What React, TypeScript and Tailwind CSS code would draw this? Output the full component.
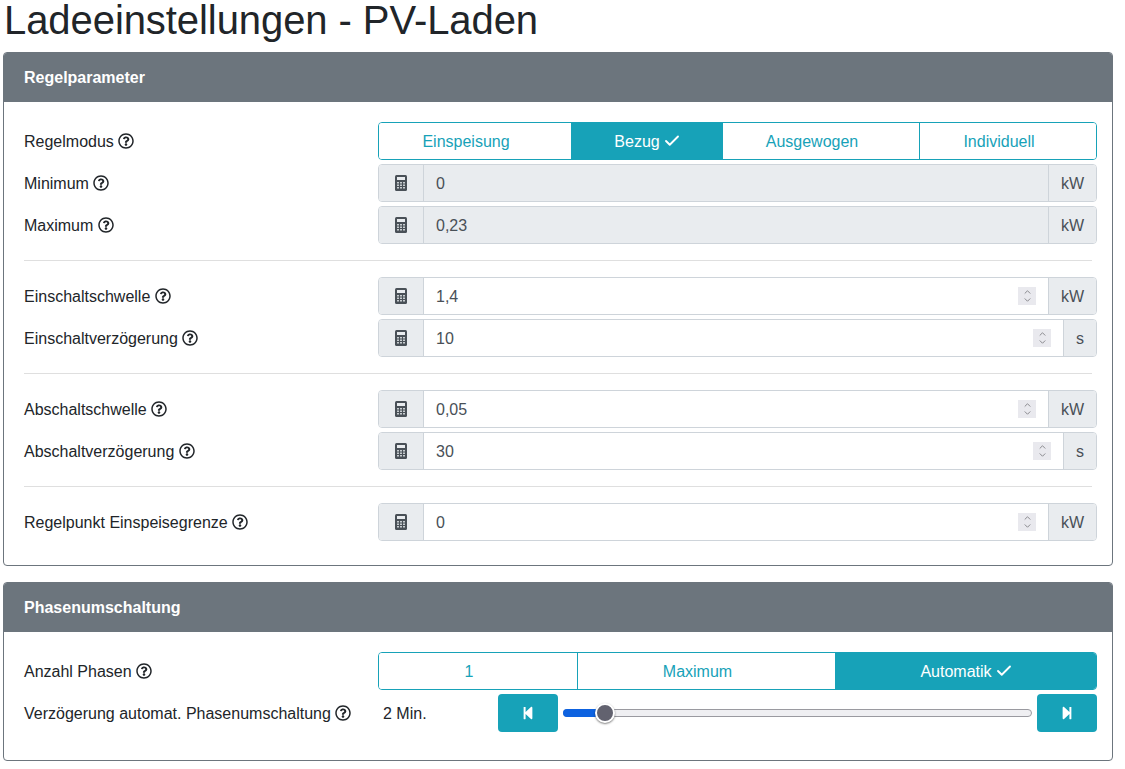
import { FaRegQuestionCircle, FaStepBackward, FaStepForward } from "react-icons/fa";
import { Check, ChevronUp, ChevronDown } from "lucide-react";

const Help = () => <FaRegQuestionCircle className="inline-block ml-[4.5px] text-[16px] text-[#212529] align-[-2px]" />;

const CalculatorIcon = () => (
  <svg width="12" height="16" viewBox="0 0 12 16" aria-hidden="true">
    <rect width="12" height="16" rx="1.5" fill="#495057" />
    <rect x="2" y="2" width="8" height="3" fill="#e9ecef" />
    <rect x="2" y="7" width="2" height="1.5" fill="#e9ecef" opacity="0.8" />
    <rect x="5" y="7" width="2" height="1.5" fill="#e9ecef" opacity="0.8" />
    <rect x="8" y="7" width="2" height="1.5" fill="#e9ecef" opacity="0.8" />
    <rect x="2" y="9.5" width="2" height="1.5" fill="#e9ecef" opacity="0.8" />
    <rect x="5" y="9.5" width="2" height="1.5" fill="#e9ecef" opacity="0.8" />
    <rect x="8" y="9.5" width="2" height="1.5" fill="#e9ecef" opacity="0.8" />
    <rect x="2" y="12" width="2" height="1.5" fill="#e9ecef" opacity="0.8" />
    <rect x="5" y="12" width="2" height="1.5" fill="#e9ecef" opacity="0.8" />
    <rect x="8" y="12" width="2" height="1.5" fill="#e9ecef" opacity="0.8" />
  </svg>
);

const Label = ({ text }: { text: string }) => (
  <div className="w-[354px] shrink-0 pt-[2px] text-[#212529]">
    {text}
    <Help />
  </div>
);

const Segmented = ({ items }: { items: { label: string; width: string; active?: boolean }[] }) => (
  <div className="flex flex-1 h-[38px] rounded border border-[#17a2b8] overflow-hidden">
    {items.map((item, i) => (
      <div
        key={item.label}
        className={`${item.width} flex items-center justify-center gap-[3px] pt-[2px] ${i > 0 ? "border-l border-[#17a2b8]" : ""} ${item.active ? "bg-[#17a2b8] text-white pl-[1px]" : "bg-white text-[#17a2b8]"}`}
      >
        {item.label}
        {/* inactive buttons keep the room of the hidden check mark */}
        {item.active ? <Check size={18} strokeWidth={2.5} className="-mt-[2px]" /> : <span className="w-[15px]" />}
      </div>
    ))}
  </div>
);

const NumberRow = ({ label, value, unit, disabled }: { label: string; value: string; unit: string; disabled?: boolean }) => (
  <div className="flex items-center h-[38px]">
    <Label text={label} />
    <div className="flex flex-1 h-[38px] rounded border border-[#ced4da] overflow-hidden text-[#495057]">
      <div className="w-[45px] shrink-0 flex items-center justify-center bg-[#e9ecef] border-r border-[#ced4da]">
        <CalculatorIcon />
      </div>
      <div className={`flex-1 flex items-center justify-between px-[12px] ${disabled ? "bg-[#e9ecef]" : "bg-white"}`}>
        <span className="pt-[2px]">{value}</span>
        {!disabled && (
          <span className="w-[18px] h-[18px] bg-[#e9e9ee] flex flex-col items-center justify-center text-[#77777c]">
            <ChevronUp size={11} strokeWidth={2} className="-mb-[1px]" />
            <ChevronDown size={11} strokeWidth={2} className="-mt-[1px]" />
          </span>
        )}
      </div>
      <div className={`${unit === "kW" ? "w-[48px]" : "w-[33px]"} shrink-0 flex items-center justify-center pt-[2px] bg-[#e9ecef] border-l border-[#ced4da]`}>
        {unit}
      </div>
    </div>
  </div>
);

const Card = ({ title, children }: { title: string; children: React.ReactNode }) => (
  <section className="rounded border border-[#6c757d] overflow-hidden ml-[3px] w-[1110px]">
    <div className="h-[49px] bg-[#6c757d] text-white font-bold flex items-center px-[20px]">{title}</div>
    <div className="pl-[20px] pr-[15px] pt-[20px]">{children}</div>
  </section>
);

const Divider = () => <hr className="border-t border-[#dfdfdf] mt-[16px] mb-[16px] mr-[5px]" />;

export default function App() {
  return (
    <div className="bg-white h-[769px] overflow-hidden font-['Liberation_Sans',Arial,sans-serif] text-[16px] leading-[24px]">
      <h1 className="text-[40px] leading-[40px] h-[48px] pl-[4px] tracking-[-0.07px] text-[#212529] font-normal">
        Ladeeinstellungen - PV-Laden
      </h1>
      <div className="mt-[4px]">
        <Card title="Regelparameter">
          <div className="flex flex-col gap-[4px]">
            <div className="flex items-center h-[38px]">
              <Label text="Regelmodus" />
              <Segmented
                items={[
                  { label: "Einspeisung", width: "w-[192px]" },
                  { label: "Bezug", width: "w-[151px]", active: true },
                  { label: "Ausgewogen", width: "w-[197px]" },
                  { label: "Individuell", width: "flex-1" },
                ]}
              />
            </div>
            <NumberRow label="Minimum" value="0" unit="kW" disabled />
            <NumberRow label="Maximum" value="0,23" unit="kW" disabled />
          </div>
          <Divider />
          <div className="flex flex-col gap-[4px]">
            <NumberRow label="Einschaltschwelle" value="1,4" unit="kW" />
            <NumberRow label="Einschaltverzögerung" value="10" unit="s" />
          </div>
          <Divider />
          <div className="flex flex-col gap-[4px]">
            <NumberRow label="Abschaltschwelle" value="0,05" unit="kW" />
            <NumberRow label="Abschaltverzögerung" value="30" unit="s" />
          </div>
          <Divider />
          <NumberRow label="Regelpunkt Einspeisegrenze" value="0" unit="kW" />
          <div className="h-[24px]" />
        </Card>
      </div>
      <div className="mt-[16px]">
        <Card title="Phasenumschaltung">
          <div className="flex flex-col gap-[4px]">
            <div className="flex items-center h-[38px]">
              <Label text="Anzahl Phasen" />
              <Segmented
                items={[
                  { label: "1", width: "w-[198px]" },
                  { label: "Maximum", width: "w-[258px]" },
                  { label: "Automatik", width: "flex-1", active: true },
                ]}
              />
            </div>
            <div className="flex items-center h-[38px]">
              <Label text="Verzögerung automat. Phasenumschaltung" />
              <div className="w-[120px] shrink-0 pl-[5px] pt-[2px] text-[#212529]">2 Min.</div>
              <button className="w-[60px] h-[38px] rounded bg-[#17a2b8] text-white flex items-center justify-center">
                <FaStepBackward className="text-[14px]" />
              </button>
              <div className="relative flex-1 mx-[5px] h-[8px] rounded-full border border-[#9a9aa0] bg-[#efeff2]">
                <div className="absolute -left-px -top-px h-[8px] w-[42px] rounded-full bg-[#0d62e0]" />
                <div className="absolute left-[31px] top-[-7px] w-[20px] h-[20px] rounded-full bg-[#62626f] border-2 border-white shadow-[0_1px_2px_rgba(0,0,0,0.5)]" />
              </div>
              <button className="w-[60px] h-[38px] rounded bg-[#17a2b8] text-white flex items-center justify-center">
                <FaStepForward className="text-[14px]" />
              </button>
            </div>
          </div>
          <div className="h-[28px]" />
        </Card>
      </div>
    </div>
  );
}
